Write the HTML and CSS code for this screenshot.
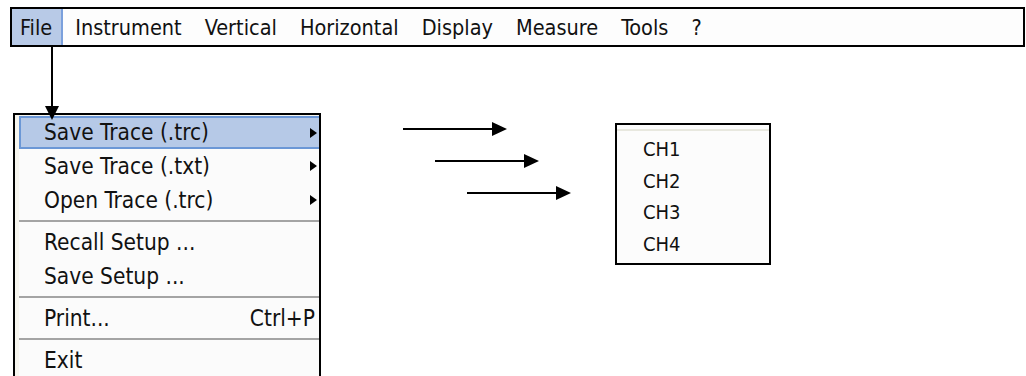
FILE: index.html
```html
<!DOCTYPE html>
<html lang="en">
<head>
  <meta charset="UTF-8" />
  <title>File menu</title>
  <link rel="stylesheet" href="styles.css">
</head>
<body>
  <div class="page">
    <nav class="menubar">
      <span class="item active">File</span>
      <span class="item">Instrument</span>
      <span class="item">Vertical</span>
      <span class="item">Horizontal</span>
      <span class="item">Display</span>
      <span class="item">Measure</span>
      <span class="item">Tools</span>
      <span class="item">?</span>
    </nav>

    <svg class="drop-arrow" width="16" height="74" viewBox="0 0 16 74">
      <line x1="8" y1="0" x2="8" y2="60" stroke="#000" stroke-width="2"/>
      <polygon points="1,59 15,59 8,73" fill="#000"/>
    </svg>

    <div class="stage">
      <div class="dropdown">
        <div class="menu-list">
          <div class="row active">Save Trace (.trc)<span class="sub"></span></div>
          <div class="row">Save Trace (.txt)<span class="sub"></span></div>
          <div class="row">Open Trace (.trc)<span class="sub"></span></div>
          <div class="sep"></div>
          <div class="row">Recall Setup ...</div>
          <div class="row">Save Setup ...</div>
          <div class="sep"></div>
          <div class="row">Print...<span class="key">Ctrl+P</span></div>
          <div class="sep"></div>
          <div class="row">Exit</div>
        </div>
      </div>

      <svg class="arrows" width="168" height="82" viewBox="0 0 168 82">
        <line x1="0" y1="8" x2="90" y2="8" stroke="#000" stroke-width="2"/>
        <polygon points="89,1 104,8 89,15" fill="#000"/>
        <line x1="32" y1="40" x2="122" y2="40" stroke="#000" stroke-width="2"/>
        <polygon points="121,33 136,40 121,47" fill="#000"/>
        <line x1="64" y1="72" x2="154" y2="72" stroke="#000" stroke-width="2"/>
        <polygon points="153,65 168,72 153,79" fill="#000"/>
      </svg>

      <div class="submenu">
        <div class="sub-rule"></div>
        <div class="ch">CH1</div>
        <div class="ch">CH2</div>
        <div class="ch">CH3</div>
        <div class="ch">CH4</div>
      </div>
    </div>
  </div>
</body>
</html>
```

FILE: styles.css
```css
html, body {
  margin: 0;
  padding: 0;
  background: #ffffff;
  overflow: hidden;
}
body {
  font-family: "DejaVu Sans Condensed", "DejaVu Sans", sans-serif;
  font-stretch: condensed;
  color: #111;
}
.page {
  position: relative;
  width: 1026px;
  height: 376px;
  overflow: hidden;
}
.menubar {
  display: flex;
  gap: 4px;
  height: 36px;
  margin: 7px 1px 0 10px;
  border: 2px solid #000;
  background: #fdfdfd;
  font-size: 21.5px;
}
.item {
  padding: 2px 11px 0 8px;
  line-height: 34px;
}
.item.active {
  background: #b8cae7;
  border-right: 2px solid #7ba0dc;
  padding-right: 9px;
}
.drop-arrow {
  position: absolute;
  left: 44px;
  top: 47px;
}
.stage {
  display: flex;
  align-items: flex-start;
  margin-top: 66px;
}
.dropdown {
  width: 300px;
  height: 270px;
  margin-left: 13px;
  border: 2px solid #000;
  border-bottom: none;
  background: #f6f5ee;
  padding-left: 4px;
  box-sizing: content-box;
  font-size: 22.5px;
}
.menu-list {
  background: #fbfbfb;
  height: 100%;
}
.row {
  display: flex;
  align-items: center;
  height: 34px;
  padding: 0 4px 0 25px;
  line-height: 34px;
  box-sizing: border-box;
}
.row.active {
  background: #b6c9e7;
  border: 2px solid #6b97d6;
  border-right: none;
  padding-left: 23px;
  margin-top: 1px;
  height: 33px;
  line-height: 29px;
}
.sub {
  margin-left: auto;
  margin-right: -2px;
  width: 0;
  height: 0;
  border-left: 7px solid #000;
  border-top: 5px solid transparent;
  border-bottom: 5px solid transparent;
}
.key {
  margin-left: auto;
}
.sep {
  height: 2px;
  margin: 3px 0;
  background: #a4a4a4;
}
.arrows {
  margin: 8px 0 0 82px;
}
.submenu {
  width: 152px;
  margin: 10px 0 0 44px;
  padding: 4px 0 3px;
  border: 2px solid #000;
  background: #fcfcfc;
  font-size: 20px;
}
.sub-rule {
  height: 2px;
  margin-bottom: 3px;
  background: #e8e8df;
}
.ch {
  padding-left: 26px;
  height: 31.5px;
  line-height: 31.5px;
}
```
